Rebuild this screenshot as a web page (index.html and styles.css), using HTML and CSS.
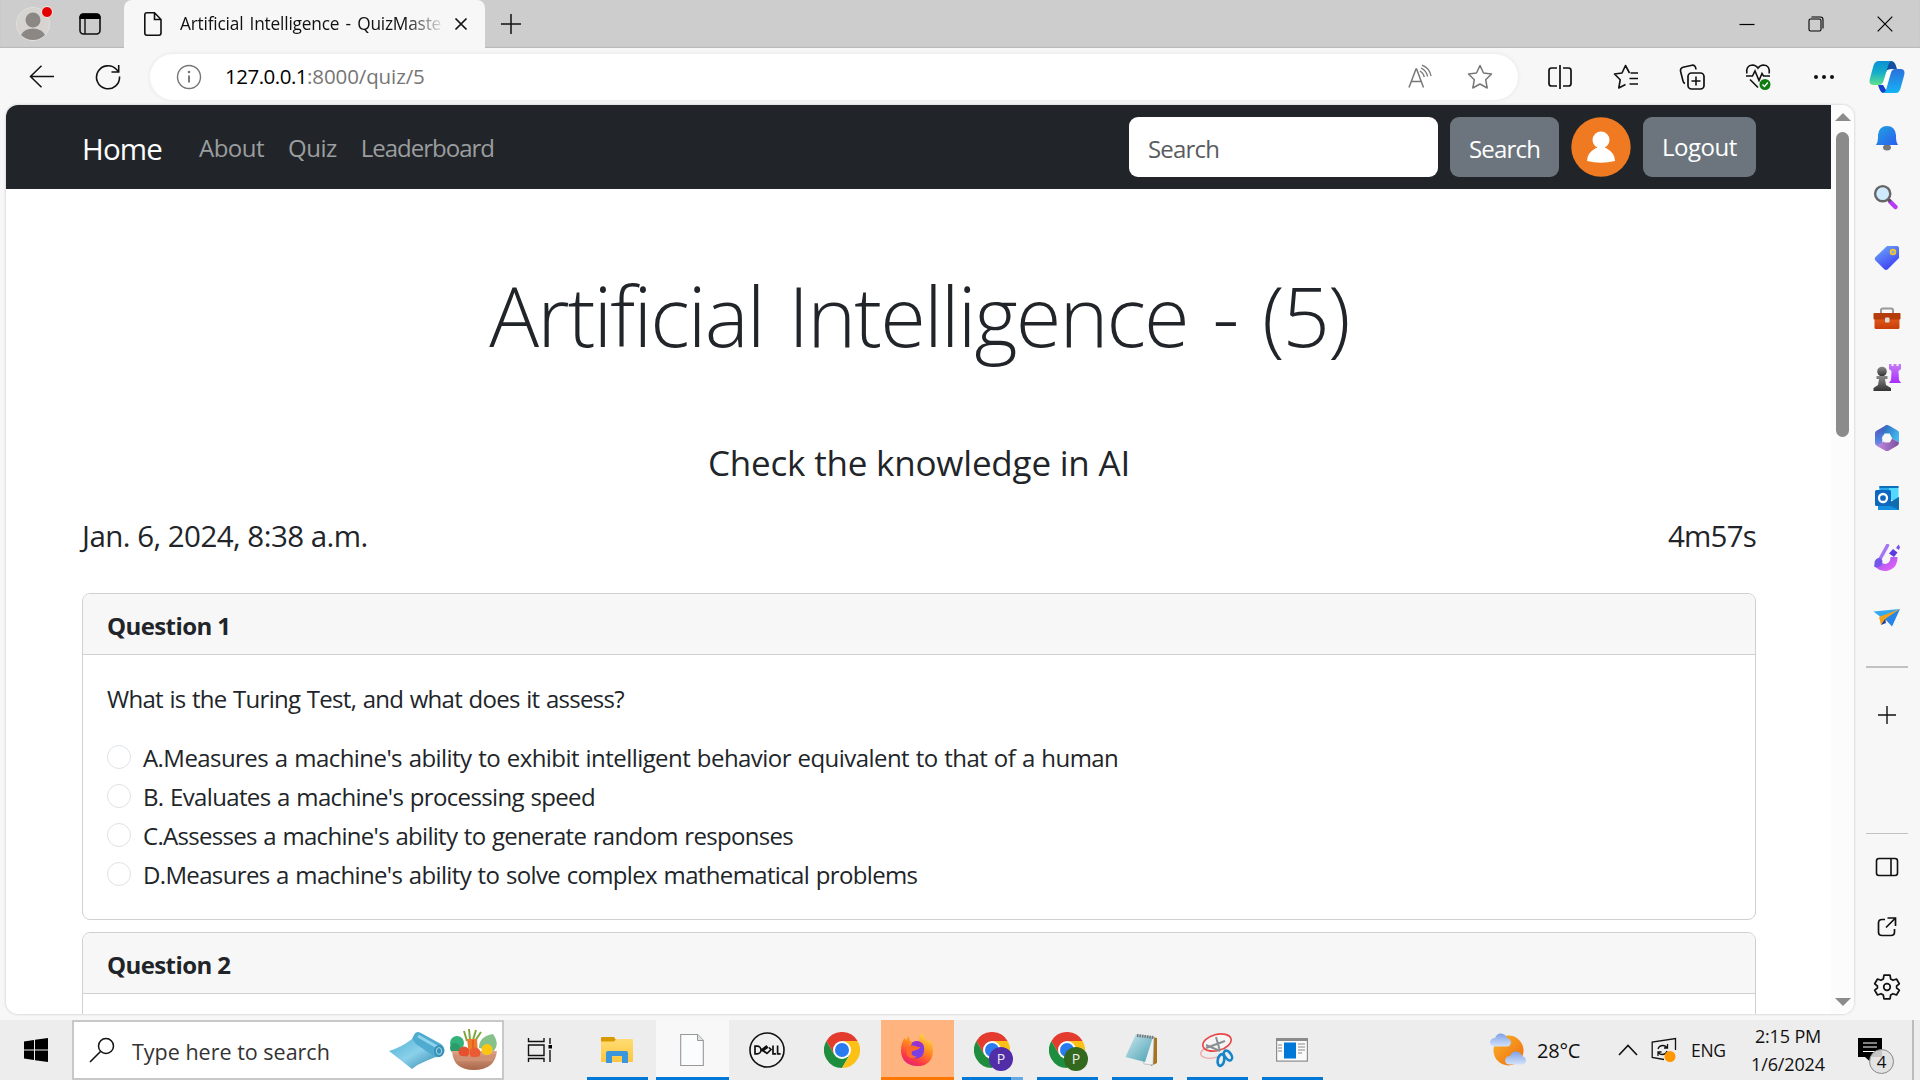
FILE: index.html
```html
<!DOCTYPE html>
<html lang="en">
<head>
<meta charset="utf-8">
<title>Artificial Intelligence - QuizMaster</title>
<link rel="stylesheet" href="styles.css">
</head>
<body>
<svg class="defs" aria-hidden="true">
  <defs>
    <linearGradient id="gBell" x1="0" y1="0" x2="1" y2="1"><stop offset="0" stop-color="#1fa3e0"/><stop offset="1" stop-color="#2b5df0"/></linearGradient>
    <linearGradient id="gTag" x1="0" y1="0" x2=".6" y2="1"><stop offset="0" stop-color="#6fb0fb"/><stop offset="1" stop-color="#3f3ff2"/></linearGradient>
    <linearGradient id="gBox" x1="0" y1="0" x2="0" y2="1"><stop offset="0" stop-color="#e8601c"/><stop offset="1" stop-color="#c63d0c"/></linearGradient>
    <linearGradient id="gRook" x1="0" y1="0" x2="0" y2="1"><stop offset="0" stop-color="#c77df5"/><stop offset="1" stop-color="#a92cff"/></linearGradient>
    <linearGradient id="gPawn" x1="0" y1="0" x2="0" y2="1"><stop offset="0" stop-color="#8a8a8a"/><stop offset="1" stop-color="#333"/></linearGradient>
    <linearGradient id="gCopA" x1="0" y1="0" x2="0" y2="1"><stop offset="0" stop-color="#0a8fd4"/><stop offset=".5" stop-color="#17b0c8"/><stop offset="1" stop-color="#5fe08c"/></linearGradient>
    <linearGradient id="gCopB" x1="0" y1="0" x2="0" y2="1"><stop offset="0" stop-color="#2c6fdc"/><stop offset="1" stop-color="#14b4f6"/></linearGradient>
    <linearGradient id="gSun" x1="0" y1="0" x2="1" y2="1"><stop offset="0" stop-color="#f8b52a"/><stop offset="1" stop-color="#f0690e"/></linearGradient>
    <linearGradient id="gCloud" x1="0" y1="0" x2="0" y2="1"><stop offset="0" stop-color="#7da2e6"/><stop offset="1" stop-color="#d4e2fa"/></linearGradient>
    <linearGradient id="gFox" x1=".8" y1="0" x2=".3" y2="1"><stop offset="0" stop-color="#ffe04a"/><stop offset=".45" stop-color="#ff8a1f"/><stop offset=".8" stop-color="#fb3a44"/><stop offset="1" stop-color="#e5207f"/></linearGradient>
    <linearGradient id="gFolder" x1="0" y1="0" x2="0" y2="1"><stop offset="0" stop-color="#ffdc73"/><stop offset="1" stop-color="#fdc63f"/></linearGradient>
    <linearGradient id="gMat" x1="0" y1="0" x2="1" y2="1"><stop offset="0" stop-color="#4fb3d6"/><stop offset=".5" stop-color="#8bd0ea"/><stop offset="1" stop-color="#2c86ad"/></linearGradient>
    <linearGradient id="gBowl" x1="0" y1="0" x2="0" y2="1"><stop offset="0" stop-color="#e0a688"/><stop offset="1" stop-color="#a9664a"/></linearGradient>
    <linearGradient id="gNote" x1="0" y1="0" x2="1" y2="1"><stop offset="0" stop-color="#cdeaf0"/><stop offset="1" stop-color="#4a9fb2"/></linearGradient>
    <linearGradient id="gMagnet" x1="0" y1="0" x2="1" y2="1"><stop offset="0" stop-color="#8f5bf0"/><stop offset="1" stop-color="#e060f5"/></linearGradient>
    <linearGradient id="gHexA" x1="0" y1="0" x2="0" y2="1"><stop offset="0" stop-color="#5b4bb5"/><stop offset=".6" stop-color="#4c7fdc"/><stop offset="1" stop-color="#a58be0"/></linearGradient>
    <linearGradient id="gHexB" x1="0" y1="0" x2="1" y2=".6"><stop offset="0" stop-color="#2a62b8"/><stop offset="1" stop-color="#45b8f0"/></linearGradient>
    <linearGradient id="gHexC" x1="0" y1="0" x2="1" y2="0"><stop offset="0" stop-color="#c08ae0"/><stop offset="1" stop-color="#7c4f9c"/></linearGradient>
    <symbol id="chrome" viewBox="0 0 36 36">
      <path d="M18 9H33.6A18 18 0 0 0 2.4 9L10.2 22.5Z" fill="#e33b2e"/>
      <path d="M10.2 22.5 2.4 9A18 18 0 0 0 18 36L25.8 22.5Z" fill="#1e8e3e"/>
      <path d="M25.8 22.5 18 36A18 18 0 0 0 33.6 9H18Z" fill="#fbc116"/>
      <circle cx="18" cy="18" r="9" fill="#fff"/><circle cx="18" cy="18" r="7" fill="#2a7af0"/>
    </symbol>
  </defs>
</svg>

<header class="tabstrip">
  <svg class="profile" width="40" height="40" viewBox="0 0 40 40"><circle cx="19" cy="20" r="16.5" fill="#d6d4d0" stroke="#e2e0dc"/><circle cx="19" cy="16" r="7.5" fill="#8b8784"/><path d="M7 31a12.5 9 0 0 1 24 0 17 17 0 0 1-24 0Z" fill="#8b8784"/><circle cx="33" cy="8" r="5.5" fill="#e50000" stroke="#eee"/></svg>
  <svg class="workspace" width="24" height="24" viewBox="0 0 24 24"><rect x="2" y="2" width="20" height="20" rx="3.5" fill="none" stroke="#111" stroke-width="1.6"/><path d="M1.5 7V4.5Q2 1.5 5 1.5H19Q22 1.5 22.5 4.5V7Z" fill="#000"/><path d="M7 7V22" stroke="#111" stroke-width="1.4"/></svg>
  <div class="tab">
    <svg class="tab-doc" width="20" height="26" viewBox="0 0 20 26"><path d="M4 1.8H11.5L18 8.5V22Q18 24.2 16 24.2H4Q1.8 24.2 1.8 22V4Q1.8 1.8 4 1.8ZM11.5 2V8.5H18" fill="none" stroke="#111" stroke-width="1.6"/></svg>
    <span class="tab-title">Artificial Intelligence - QuizMaste</span>
    <svg width="14" height="14" viewBox="0 0 14 14"><path d="M1.5 1.5 12.5 12.5M12.5 1.5 1.5 12.5" stroke="#111" stroke-width="1.7"/></svg>
  </div>
  <svg class="new-tab" width="22" height="22" viewBox="0 0 22 22"><path d="M11 1V21M1 11H21" stroke="#111" stroke-width="1.5"/></svg>
  <div class="window-buttons">
    <svg width="16" height="16" viewBox="0 0 16 16"><path d="M.5 8.5H15.5" stroke="#000" stroke-width="1.2"/></svg>
    <svg width="16" height="16" viewBox="0 0 16 16"><rect x="1" y="3" width="12" height="12" rx="1.5" fill="none" stroke="#000" stroke-width="1.1"/><path d="M3.5 1H12.5Q15 1 15 3.5V12.5" fill="none" stroke="#000" stroke-width="1.1"/></svg>
    <svg width="16" height="16" viewBox="0 0 16 16"><path d="M.7.7 15.3 15.3M15.3.7.7 15.3" stroke="#000" stroke-width="1.2"/></svg>
  </div>
</header>

<div class="toolbar">
  <svg class="back" width="26" height="26" viewBox="0 0 26 26"><path d="M25 12.5H1.5M12.5 1.8 1.5 12.5 12.5 23.2" fill="none" stroke="#111" stroke-width="1.5"/></svg>
  <svg class="reload" width="26" height="26" viewBox="0 0 26 26"><path d="M24.5 12.5A11.5 11.5 0 1 1 21.5 5.5L23.5 7.5M23.7 1V8H16.5" fill="none" stroke="#111" stroke-width="1.6"/></svg>
  <div class="address">
    <svg width="26" height="26" viewBox="0 0 26 26"><circle cx="13" cy="13" r="11.5" fill="none" stroke="#757575" stroke-width="1.4"/><path d="M13 11.5V18.5" stroke="#757575" stroke-width="1.9"/><circle cx="13" cy="8" r="1.3" fill="#757575"/></svg>
    <span class="url"><b>127.0.0.1</b><span>:8000/quiz/5</span></span>
    <svg class="read" width="26" height="26" viewBox="0 0 26 26"><path d="M2 23.5 9 5H9.6L16.5 23.5M4.5 17.5H14" fill="none" stroke="#777" stroke-width="1.5"/><path d="M13 7Q16.5 9 17.3 13M14 4Q19.5 6.5 20.5 12.5M15 1.2Q22.5 4 24 12" fill="none" stroke="#777" stroke-width="1.3"/></svg>
    <svg width="26" height="26" viewBox="0 0 26 26"><path d="M13 1.5 16.5 9 24.5 10 18.7 15.8 20.2 24 13 20 5.8 24 7.3 15.8 1.5 10 9.5 9Z" fill="none" stroke="#777" stroke-width="1.5" stroke-linejoin="round"/></svg>
  </div>
  <div class="tools">
    <svg width="26" height="26" viewBox="0 0 26 26"><path d="M10 4H4.5Q2 4 2 6.5V19.5Q2 22 4.5 22H10M16 4H21.5Q24 4 24 6.5V19.5Q24 22 21.5 22H16M13 1V25" fill="none" stroke="#111" stroke-width="1.7"/></svg>
    <svg width="26" height="26" viewBox="0 0 26 26"><path d="M16.5 9 12.5 1.5 9 9 1.5 10 7.2 15.8 5.8 24 12.5 20.5M17.5 9H25M16.5 14.5H25M16.5 20H25" fill="none" stroke="#111" stroke-width="1.6" stroke-linejoin="round"/></svg>
    <svg width="26" height="26" viewBox="0 0 26 26"><rect x="9" y="9" width="16" height="16" rx="3.5" fill="none" stroke="#111" stroke-width="1.7"/><path d="M17 12.5V21.5M12.5 17H21.5M6 19.5Q4.5 19 4 17L1.5 7Q1.2 4 4 3.2L13 1.2Q16.5.8 17 5.5" fill="none" stroke="#111" stroke-width="1.6"/></svg>
    <svg width="26" height="28" viewBox="0 0 26 28"><path d="M1.8 10.5Q.7 2.5 7.5 2Q11 2 13 5.2 15 2 18.5 2 25.3 2.5 24.2 10.5M1 13H7.5L10 8 14 17.5 17 10.5 18.5 13H25M5 16.5 13 24.5" fill="none" stroke="#111" stroke-width="1.6"/><circle cx="20" cy="21.5" r="5.5" fill="#107c10"/><path d="M17.5 21.5 19.5 23.5 22.8 19.5" fill="none" stroke="#fff" stroke-width="1.3"/></svg>
    <svg width="26" height="26" viewBox="0 0 26 26"><g fill="#111"><circle cx="5" cy="13" r="2"/><circle cx="13" cy="13" r="2"/><circle cx="21" cy="13" r="2"/></g></svg>
  </div>
  <svg class="copilot" width="36" height="34" viewBox="0 0 36 34"><path d="M16 1H22Q25 1 26.5 4.5L28 9H23Q18 9 17 12Z" fill="#14509f"/><path d="M9 25H14L17 30Q18 33 14 33 11.5 33 9 25Z" fill="#173fce"/><path d="M9.5 1H23Q20.5 1 19 6L14.5 21Q13.2 25 10 25H4.5Q-.5 25 .8 19L4.5 5.5Q6 1 9.5 1Z" fill="url(#gCopA)"/><path d="M27 33H13.5Q16.5 32.5 17.5 28.5L21.8 13Q23 9 26.5 9H31.5Q36.5 9 35.2 15L31.5 28.5Q30 33 27 33Z" fill="url(#gCopB)"/><path d="M18.5 10H22.5L18 24.5H12.5Q14 24 14.7 22Z" fill="#fff"/></svg>
</div>

<div class="window-body">
  <div class="viewport">
    <main class="page">
      <nav class="navbar">
        <a class="brand">Home</a>
        <a class="nav-link">About</a>
        <a class="nav-link">Quiz</a>
        <a class="nav-link long">Leaderboard</a>
        <div class="search-field">Search</div>
        <div class="btn">Search</div>
        <svg class="avatar" width="60" height="60" viewBox="0 0 60 60"><circle cx="30" cy="30" r="29.7" fill="#f07a22"/><circle cx="30" cy="23" r="8.5" fill="#fff"/><path d="M16 44Q16 36 25 31H35Q44 36 44 44Q30 47.5 16 44Z" fill="#fff"/><rect x="26" y="28" width="8" height="6" fill="#fff"/></svg>
        <div class="btn logout">Logout</div>
      </nav>
      <div class="container">
        <h1 class="title">Artificial Intelligence - (5)</h1>
        <h2 class="subtitle">Check the knowledge in AI</h2>
        <div class="meta"><span>Jan. 6, 2024, 8:38 a.m.</span><span class="timer">4m57s</span></div>
        <section class="card">
          <h3 class="card-header">Question 1</h3>
          <div class="card-body">
            <p class="question">What is the Turing Test, and what does it assess?</p>
            <label class="option first"><i class="radio"></i><span>A.Measures a machine's ability to exhibit intelligent behavior equivalent to that of a human</span></label>
            <label class="option"><i class="radio"></i><span>B. Evaluates a machine's processing speed</span></label>
            <label class="option third"><i class="radio"></i><span>C.Assesses a machine's ability to generate random responses</span></label>
            <label class="option"><i class="radio"></i><span>D.Measures a machine's ability to solve complex mathematical problems</span></label>
          </div>
        </section>
        <section class="card">
          <h3 class="card-header">Question 2</h3>
          <div class="card-body"></div>
        </section>
      </div>
    </main>
    <div class="scrollbar">
      <svg width="16" height="8" viewBox="0 0 16 8"><path d="M0 8 8 0 16 8Z" fill="#8b8b8b"/></svg>
      <div class="thumb"></div>
      <svg class="down" width="16" height="8" viewBox="0 0 16 8"><path d="M0 0 8 8 16 0Z" fill="#8b8b8b"/></svg>
    </div>
  </div>
  <aside class="sidebar">
    <div class="side-item"><svg width="28" height="28" viewBox="0 0 28 28"><ellipse cx="14" cy="23.5" rx="4" ry="3" fill="#777"/><path d="M3 21Q5 18 5 14V11Q6 2 14 2T23 11V14Q23 18 25 21Z" fill="url(#gBell)"/></svg></div>
    <div class="side-item"><svg width="28" height="28" viewBox="0 0 28 28"><path d="M17 17.5 22.5 23" stroke="#b43cf5" stroke-width="4.5" stroke-linecap="round"/><path d="M14 14 17.5 17.5" stroke="#555" stroke-width="3"/><circle cx="9.7" cy="9.7" r="7.6" fill="#cfeafc" stroke="#666" stroke-width="2.4"/></svg></div>
    <div class="side-item"><svg width="28" height="28" viewBox="0 0 28 28"><path d="M14 2H24Q26 2 26 4V14L15 25Q13 27 11 25L2.5 16.5Q1 15 2.5 13Z" fill="url(#gTag)"/><circle cx="20" cy="8" r="2.4" fill="#7aa8ff" stroke="#f7c51e" stroke-width="1.8"/></svg></div>
    <div class="side-item"><svg width="28" height="28" viewBox="0 0 28 28"><path d="M8 9V6Q8 4.500 10 4.500H18Q20 4.500 20 6V9" fill="none" stroke="#999" stroke-width="2"/><rect x="1.5" y="12" width="25" height="13" rx="1.5" fill="url(#gBox)"/><rect x=".5" y="9" width="27" height="6.5" rx="1" fill="#b53d0b"/><rect x="12" y="13.5" width="4.5" height="5" rx="1" fill="#ddd"/></svg></div>
    <div class="side-item"><svg width="28" height="28" viewBox="0 0 28 28"><path d="M16 0H18.5V2H20.5V0H23.5V2H25.5V0H28V5L25.5 7 26 16 28 19H16L18 16 18.5 7 16 5Z" fill="url(#gRook)"/><circle cx="9" cy="7.5" r="4.8" fill="url(#gPawn)"/><path d="M3.5 12H14.5V15H12L13 21 18 24V27H.5V24L5 21 6 15H3.5Z" fill="url(#gPawn)"/></svg></div>
    <div class="side-item"><svg width="28" height="28" viewBox="0 0 28 28"><path d="M14 .8 3.500 6.700Q2 7.500 2 9.500V19Q2 20.700 3.500 21.600L9 24.500 9.500 11 17 4.500Z" fill="url(#gHexA)"/><path d="M12 2Q14 .5 16 1.600L24.500 6.500Q26 7.300 26 9V18.500L19 14.500 16.500 10 9.500 13V6Z" fill="url(#gHexB)"/><path d="M26 18.500Q26 20.600 24.500 21.500L16 26.500Q14 27.600 12 26.500L4 22 11.500 17 17 18 19 14.500Z" fill="url(#gHexC)"/><path d="M11.500 9.500H16.500L19 14 16.500 18.500H11.500L9 14Z" fill="#f7f7f7"/></svg></div>
    <div class="side-item"><svg width="28" height="28" viewBox="0 0 28 28"><rect x="6.5" y="2" width="19" height="14" fill="#50d9ff"/><path d="M6.5 2H16V9H6.5Z" fill="#28a8ea"/><path d="M6.5 2H25.5V4H6.5Z" fill="#0d6db7"/><path d="M5 14 16 19 26 13V26H5Z" fill="#1490df"/><path d="M14 20 26 13V26Z" fill="#0f6dae"/><rect x="2" y="6" width="16" height="16" rx="1.5" fill="#0f68bf"/><circle cx="10" cy="14" r="4" fill="none" stroke="#fff" stroke-width="2.3"/></svg></div>
    <div class="side-item"><svg width="28" height="28" viewBox="0 0 28 28"><path d="M4 19Q7 24 13 23.5 21 22 21 13" fill="none" stroke="url(#gMagnet)" stroke-width="7"/><path d="M14.5 1.5 7 15" stroke="#a575f2" stroke-width="3.5" stroke-linecap="round"/><path d="M7 14Q11 16 8.5 21 5 25 1 22.5 2 21 1.5 18 3 13.5 7 14Z" fill="#7458e8"/><path d="M20 5 24.5 8.5 21 13 16 9.5Z" fill="#5b3ae0"/><path d="M25.5.5 27 3 26 6 23 4Z" fill="#7b4ff0"/></svg></div>
    <div class="side-item"><svg width="28" height="28" viewBox="0 0 28 28"><path d="M.5 7.5 27 5 9 14Z" fill="#35a9ee"/><path d="M6 13 27 5 8 21Z" fill="#f2a31c"/><path d="M12 15 27 5 19 22.5Z" fill="#2585e8"/><path d="M8 21 12 15 13 19Z" fill="#1c3fae"/></svg></div>
    <hr class="side-rule">
    <div class="side-item add"><svg width="20" height="20" viewBox="0 0 20 20"><path d="M10 1V19M1 10H19" stroke="#111" stroke-width="1.4"/></svg></div>
    <hr class="side-rule lower">
    <div class="side-item"><svg width="26" height="26" viewBox="0 0 26 26"><rect x="2.5" y="4.5" width="21" height="17" rx="2.5" fill="none" stroke="#111" stroke-width="1.6"/><path d="M17 4.5V21.5" stroke="#111" stroke-width="1.6"/></svg></div>
    <div class="side-item"><svg width="26" height="26" viewBox="0 0 26 26"><path d="M11 5.5H8Q4.5 5.5 4.5 9V18Q4.5 21.5 8 21.5H17Q20.5 21.5 20.5 18V15M13.5 4H21.5V12M12 13.5 21.5 4" fill="none" stroke="#111" stroke-width="1.7"/></svg></div>
    <div class="side-item"><svg width="28" height="28" viewBox="0 0 28 28"><path d="M11 2.2H17L17.7 6 20 7.3 23.5 6 26.3 10.8 23.6 13V15L26.3 17.2 23.5 22 20 20.7 17.7 22 17 25.8H11L10.3 22 8 20.7 4.5 22 1.7 17.2 4.4 15V13L1.7 10.8 4.5 6 8 7.3 10.3 6Z" fill="none" stroke="#111" stroke-width="1.7" stroke-linejoin="round"/><circle cx="14" cy="14" r="3.3" fill="none" stroke="#111" stroke-width="1.7"/></svg></div>
  </aside>
</div>

<footer class="taskbar">
  <svg class="start" width="24" height="24" viewBox="0 0 24 24"><path d="M0 3.5 10 2V11.5H0ZM11 1.8 24 0V11.5H11ZM0 12.5H10V22L0 20.5ZM11 12.5H24V24L11 22.2Z" fill="#000"/></svg>
  <div class="task-search">
    <svg class="lens" width="26" height="26" viewBox="0 0 26 26"><circle cx="17" cy="9" r="7.5" fill="none" stroke="#111" stroke-width="1.5"/><path d="M11.5 14.5 1 25" stroke="#111" stroke-width="1.6"/></svg>
    <span class="task-placeholder">Type here to search</span>
    <svg class="doodle" width="114" height="42" viewBox="0 0 114 42"><path d="M1 22Q14 18 24 10L50 27 38 32Q30 35 24 40Z" fill="url(#gMat)"/><path d="M24 10 26 6Q28 1 33 4L53 15Q58 19 56 24 53 29 47 28L28 15Z" fill="#4fabcf"/><path d="M30 7 51 19" stroke="#8fd4ec" stroke-width="3"/><ellipse cx="51" cy="22" rx="5" ry="6" fill="#3a90b6"/><ellipse cx="51" cy="22" rx="2.7" ry="3.4" fill="none" stroke="#a5dcee"/>
      <path d="M79 12 76 2M82 11 81 0M85 11 88 1M87 12 93 3" stroke="#7fa63c" stroke-width="2"/><circle cx="69" cy="14" r="7" fill="#34b27b"/><circle cx="67" cy="19" r="5" fill="#2b9c69"/><path d="M91 19Q91 7 105 5 112 14 106 22Z" fill="#86c08a"/><path d="M79 10H89L90 26H81Z" fill="#f0792b"/><path d="M85 11V22" stroke="#d95f1a" stroke-width="1.5"/><path d="M64 22H109Q107 41 86 41T64 22Z" fill="url(#gBowl)"/><circle cx="76" cy="23" r="5.5" fill="#e4512f"/><circle cx="87" cy="24" r="5.5" fill="#ea5b33"/><circle cx="99" cy="20.5" r="5.5" fill="#fcc612"/><path d="M65 25Q86 31 108 25L104 32H69Z" fill="#cf9073"/></svg>
  </div>
  <svg class="taskview" width="26" height="26" viewBox="0 0 26 26"><path d="M1.5 1V4.5H17V1M1.5 25V21.5H17V25M1.5 8H17V18.5H1.5ZM23 1V7M23 13V25" fill="none" stroke="#111" stroke-width="1.4"/><rect x="21.5" y="8" width="3.5" height="3.5" fill="#000"/></svg>
  <div class="apps">
    <div class="app open"><svg width="34" height="30" viewBox="0 0 34 30"><path d="M1 3Q1 2 2 2H14L16 5 14 7H1Z" fill="#d99a00"/><path d="M1 6.5H14L17 4H32Q33 4 33 5V26Q33 27 32 27H2Q1 27 1 26Z" fill="url(#gFolder)"/><path d="M6 28V18Q6 16 8 16H26Q28 16 28 18V28H22V21H12V28Z" fill="#3a96dd"/></svg></div>
    <div class="app open active"><svg width="24" height="34" viewBox="0 0 24 34"><path d="M.7 1.5H17.5L23.3 7.5V32.5H.7Z" fill="#fbfcfd" stroke="#999" stroke-width="1.1"/><path d="M17.5 1.5V7.5H23.3" fill="#e2e2e2" stroke="#999"/></svg></div>
    <div class="app"><svg width="36" height="36" viewBox="0 0 36 36"><circle cx="18" cy="18" r="17" fill="#f0f0f0" stroke="#111" stroke-width="1.6"/><path d="M6 14.2H8.2A3.8 3.8 0 0 1 8.2 21.8H6ZM24 13.5V21.8H27M28.6 13.5V21.8H31.6M17.5 21 12.5 18 18 13.8M18.5 21.8 14 18.5 19 15M20 15.5 22 17.5 18 21.5" fill="none" stroke="#111" stroke-width="1.7"/></svg></div>
    <div class="app"><svg width="36" height="36"><use href="#chrome"/></svg></div>
    <div class="app open alert"><svg width="34" height="34" viewBox="0 0 36 36"><path d="M23 0Q26 3 27 7L30 10 31 6Q35 11 35 19 34 35 18 35 2 34 1 19 1 10 5 5L6 8 9 3 11 9 20 10Q20 4 23 0Z" fill="url(#gFox)"/><path d="M13 10Q20 8 25 13 27 20 23 25 17 29 11 25 7 20 11 15Z" fill="#7b3fe4"/><path d="M7 16Q11 12 17 14L22 15Q17 19 13 19 10 24 18 25 11 29 7 23Z" fill="#ff6a2b"/><path d="M13 10Q20 6 25 13L19 15Z" fill="#9c2fd0"/></svg></div>
    <div class="app open stacked"><svg width="36" height="36"><use href="#chrome"/></svg><span class="badge violet">P</span></div>
    <div class="app open"><svg width="36" height="36"><use href="#chrome"/></svg><span class="badge green">P</span></div>
    <div class="app open"><svg width="34" height="34" viewBox="0 0 34 34"><path d="M28 4 32 5V30L26 33Z" fill="#a8721f"/><path d="M13 2 29 4 28 32 19 31Z" fill="#eef2f2" stroke="#aaa" stroke-width=".6"/><path d="M11 1 28 4 20 29 .5 24Z" fill="url(#gNote)"/><path d="M12 2.5 29 4.5" stroke="#777" stroke-width="3" stroke-dasharray="1.5 1"/></svg></div>
    <div class="app open"><svg width="36" height="36" viewBox="0 0 36 36"><g fill="none"><ellipse cx="14" cy="20" rx="12.5" ry="6" stroke="#eeaaaa" stroke-width="1.3" transform="rotate(-10 14 20)"/><ellipse cx="18" cy="10.5" rx="14.5" ry="8" fill="#f5f5f5" stroke="#ea4545" stroke-width="1.6" transform="rotate(-15 18 10.5)"/><path d="M7 13 21 19M17 5 21 19M7 16 26 9" stroke="#8a8f94" stroke-width="2"/><ellipse cx="22" cy="28" rx="3.2" ry="6" stroke="#1684c8" stroke-width="2.6" transform="rotate(12 22 28)"/><ellipse cx="29" cy="23.5" rx="3.2" ry="5.5" stroke="#1684c8" stroke-width="2.6" transform="rotate(-35 29 23.5)"/></g></svg></div>
    <div class="app open"><svg width="32" height="24" viewBox="0 0 32 24"><rect x=".6" y=".6" width="30.8" height="22.5" fill="#fafafa" stroke="#8c8c8c" stroke-width="1.2"/><path d="M0 0H32V3H0Z" fill="#8c8c8c"/><rect x="8" y="4.5" width="12" height="16" fill="#0078d7"/><path d="M22 6H29M22 9H29M22 12H29M22 15H26M2 7H6M2 10H6M2 13H6" stroke="#888" stroke-width="1.1"/></svg></div>
  </div>
  <div class="tray">
    <svg class="weather" width="36" height="34" viewBox="0 0 36 34"><circle cx="18.5" cy="17.5" r="15" fill="url(#gSun)"/><path d="M4 13.5Q0 13 0 9 1 5 5 5 7 0 11 .5 16 1 17 5 21 6 21 10 20 13.5 17 13.5Z" fill="url(#gCloud)"/><path d="M19 31.5Q15 31 15 27 16 23 20 23 22 18 26 18.5 31 19 32 23 36 24 36 28 35 31.5 32 31.5Z" fill="url(#gCloud)"/></svg>
    <span class="temp">28°C</span>
    <svg class="chevron" width="20" height="12" viewBox="0 0 20 12"><path d="M1 11 10 1.5 19 11" fill="none" stroke="#111" stroke-width="1.6"/></svg>
    <svg class="sync" width="26" height="26" viewBox="0 0 26 26"><path d="M13 22.5 1.2 20.5V5L24.5 1.5V13" fill="none" stroke="#111" stroke-width="1.3"/><path d="M7 12Q8 8.5 12 8.5 14 8.5 16 10.5M16.5 7V11H13M16 14Q15 17.5 11 17.5 9 17.5 7.5 16M7 19V15H10.5" fill="none" stroke="#111" stroke-width="1.3"/><circle cx="19" cy="19.5" r="5.5" fill="#ff9800"/></svg>
    <span class="lang">ENG</span>
    <div class="clock"><span>2:15 PM</span><span>1/6/2024</span></div>
    <div class="notice"><svg width="24" height="24" viewBox="0 0 24 24"><path d="M0 0H24V19H12.5V24L7 19H0Z" fill="#000"/><path d="M5 5H19M5 9H19M5 13.5H19" stroke="#fff" stroke-width="1.2"/></svg><span class="count">4</span></div>
  </div>
</footer>
</body>
</html>
```
FILE: styles.css
```css
* { box-sizing: border-box; }
body { margin: 0; width: 1920px; height: 1080px; overflow: hidden; display: flex; flex-direction: column; background: #f7f7f7; color: #212529; font-family: "Open Sans", "Noto Sans", sans-serif; font-size: 24px; white-space: nowrap; }
svg { display: block; flex: none; }
.defs { position: absolute; width: 0; height: 0; }

.tabstrip { height: 48px; flex: none; display: flex; align-items: center; background: #cdcdcd; padding-left: 14px; box-shadow: inset 0 -1px 1px #b9b9b9; }
.workspace { margin-left: 24px; }
.tab { display: flex; align-items: center; width: 361px; height: 48px; margin-left: 22px; padding-left: 19px; background: #f7f7f7; border-radius: 8px 8px 0 0; }
.tab-title { width: 265px; margin: 0 9px 0 17px; font-size: 17.3px; line-height: 28px; letter-spacing: -.2px; word-spacing: 2px; color: #111; -webkit-mask-image: linear-gradient(90deg, #000 85%, rgba(0, 0, 0, .15) 98%); mask-image: linear-gradient(90deg, #000 85%, rgba(0, 0, 0, .15) 98%); }
.new-tab { margin-left: 15px; }
.window-buttons { display: flex; gap: 53px; margin-left: auto; padding-right: 27px; }

.toolbar { height: 57px; flex: none; display: flex; align-items: center; padding-left: 29px; }
.reload { margin-left: 40px; }
.address { display: flex; align-items: center; width: 1368px; height: 46px; margin-left: 29px; padding: 0 25px 0 26px; background: #fff; border-radius: 23px; box-shadow: 0 0 5px rgba(0, 0, 0, .08); }
.url { margin-left: 23px; padding-bottom: 2px; font-size: 20.5px; line-height: 30px; color: #757575; display: flex; letter-spacing: -.1px; }
.url b { font-weight: 400; color: #000; letter-spacing: -.5px; }
.read { margin: 0 34px 0 auto; }
.tools { display: flex; align-items: center; gap: 40px; margin-left: 29px; }
.copilot { margin-left: 32px; }

.window-body { height: 915px; flex: none; display: flex; padding-left: 6px; }
.viewport { width: 1848px; height: 909px; display: flex; overflow: hidden; background: #fff; border-radius: 12px; box-shadow: 0 0 2px 1px #dedede; }
.page { width: 1825px; }
.navbar { display: flex; align-items: center; height: 84px; padding: 0 75px 0 76px; background: #212529; color: #fff; }
.brand { width: 80px; font-size: 29.5px; line-height: 46px; padding-top: 4px; margin-right: 25px; letter-spacing: -.85px; }
.nav-link { color: #9b9d9e; padding: 1px 12px 0; letter-spacing: -.5px; }
.nav-link.long { letter-spacing: -1px; }
.search-field { width: 309px; height: 60px; margin-left: auto; padding-left: 19px; background: #fff; border-radius: 9px; color: #595c5f; line-height: 63px; letter-spacing: -.8px; }
.btn { width: 109px; height: 60px; margin-left: 12px; padding-left: 19px; background: #6c757d; border-radius: 9px; line-height: 63px; letter-spacing: -.8px; }
.avatar { margin-left: 12px; }
.logout { width: 113px; line-height: 59px; letter-spacing: -.5px; }

.container { padding: 75px 75px 0 76px; }
.title { margin: 0 0 75px; font-size: 83px; line-height: 102px; font-weight: 300; letter-spacing: -1.9px; word-spacing: 5px; text-align: center; }
.subtitle { margin: 0 0 32px; font-size: 35px; line-height: 44px; font-weight: 400; letter-spacing: -.2px; text-align: center; }
.meta { display: flex; justify-content: space-between; margin-bottom: 38px; font-size: 29.5px; line-height: 38px; letter-spacing: -.53px; }
.timer { letter-spacing: -.8px; }
.card { margin-bottom: 12px; border: 1px solid #d0d0d0; border-radius: 8px; overflow: hidden; }
.card-header { height: 61px; margin: 0; padding-left: 24px; background: #f7f7f7; border-bottom: 1px solid #d0d0d0; font-size: 24px; font-weight: 700; line-height: 63px; letter-spacing: -.6px; }
.card-body { padding: 24px 24px 26px; min-height: 100px; }
.question { margin: 0 0 20px; line-height: 39px; height: 38px; letter-spacing: -.72px; word-spacing: 1px; }
.option { display: flex; align-items: center; height: 39px; gap: 12px; line-height: 36px; letter-spacing: -.65px; word-spacing: 1px; }
.option span { padding-top: 3px; }
.option.first { letter-spacing: -.56px; }
.option.third { letter-spacing: -.7px; }
.radio { width: 24px; height: 24px; border: 1px solid #dee2e6; border-radius: 50%; }

.scrollbar { width: 23px; display: flex; flex-direction: column; align-items: center; padding: 8px 0 8px; background: #fcfcfc; }
.thumb { width: 13px; height: 305px; margin-top: 11px; border-radius: 7px; background: #8b8b8b; }
.down { margin-top: auto; }

.sidebar { width: 66px; padding-top: 3px; display: flex; flex-direction: column; align-items: center; }
.side-item { height: 60px; flex: none; display: flex; align-items: center; }
.side-rule { width: 42px; height: 2px; margin: 18px 0; border: 0; background: #c2c2c2; flex: none; }
.side-rule.lower { height: 1px; margin: 89px 0 3px; }
.add { height: 58px; }

.taskbar { height: 60px; flex: none; display: flex; align-items: center; background: #ededed; color: #111; padding-left: 24px; }
.task-search { display: flex; align-items: center; width: 432px; height: 60px; margin-left: 24px; padding-left: 15px; background: #fff; border: 2px solid #c8c8c8; }
.task-placeholder { margin-left: 17px; font-size: 21.5px; line-height: 32px; padding-top: 3px; color: #333; }
.doodle { margin-left: auto; margin-right: 0; }
.taskview { margin-left: 23px; }
.apps { display: flex; gap: 2px; margin-left: 28px; }
.app { position: relative; width: 73px; height: 60px; display: flex; align-items: center; justify-content: center; padding-right: 2px; }
.app.open::after { content: ""; position: absolute; left: 6px; right: 6px; bottom: 0; height: 3px; background: #0078d7; }
.app.active { background: #f8f8f8; }
.app.active::after, .app.alert::after { left: 0; right: 0; }
.app.alert { background: #ffb37e; }
.app.alert::after { background: #ff7600; }
.app.stacked::after { background: linear-gradient(90deg, #0078d7 49px, #62a9e6 49px); }
.badge { position: absolute; left: 33px; top: 27px; width: 24px; height: 24px; border-radius: 50%; color: #eee; font: 14px/24px "Open Sans", sans-serif; text-align: center; }
.violet { background: #512da8; }
.green { background: #33691e; }
.tray { display: flex; align-items: center; margin-left: auto; padding-right: 6px; height: 60px; }
.temp { width: 92px; padding-left: 11px; font-size: 20px; letter-spacing: -.2px; }
.sync { margin-left: 13px; }
.lang { width: 59px; margin-left: 14px; font-size: 17.5px; letter-spacing: -.3px; }
.clock { display: flex; flex-direction: column; align-items: center; width: 76px; font-size: 18px; line-height: 28px; letter-spacing: -.15px; }
.notice { position: relative; margin-left: 32px; padding-right: 30px; border-right: 2px solid #bcbcbc; height: 60px; padding-top: 18px; }
.count { position: absolute; left: 11px; top: 29px; width: 25px; height: 25px; border: 1px solid #888; border-radius: 50%; background: rgba(225, 225, 225, .88); font: 17px/23px "Open Sans", sans-serif; text-align: center; }
```
